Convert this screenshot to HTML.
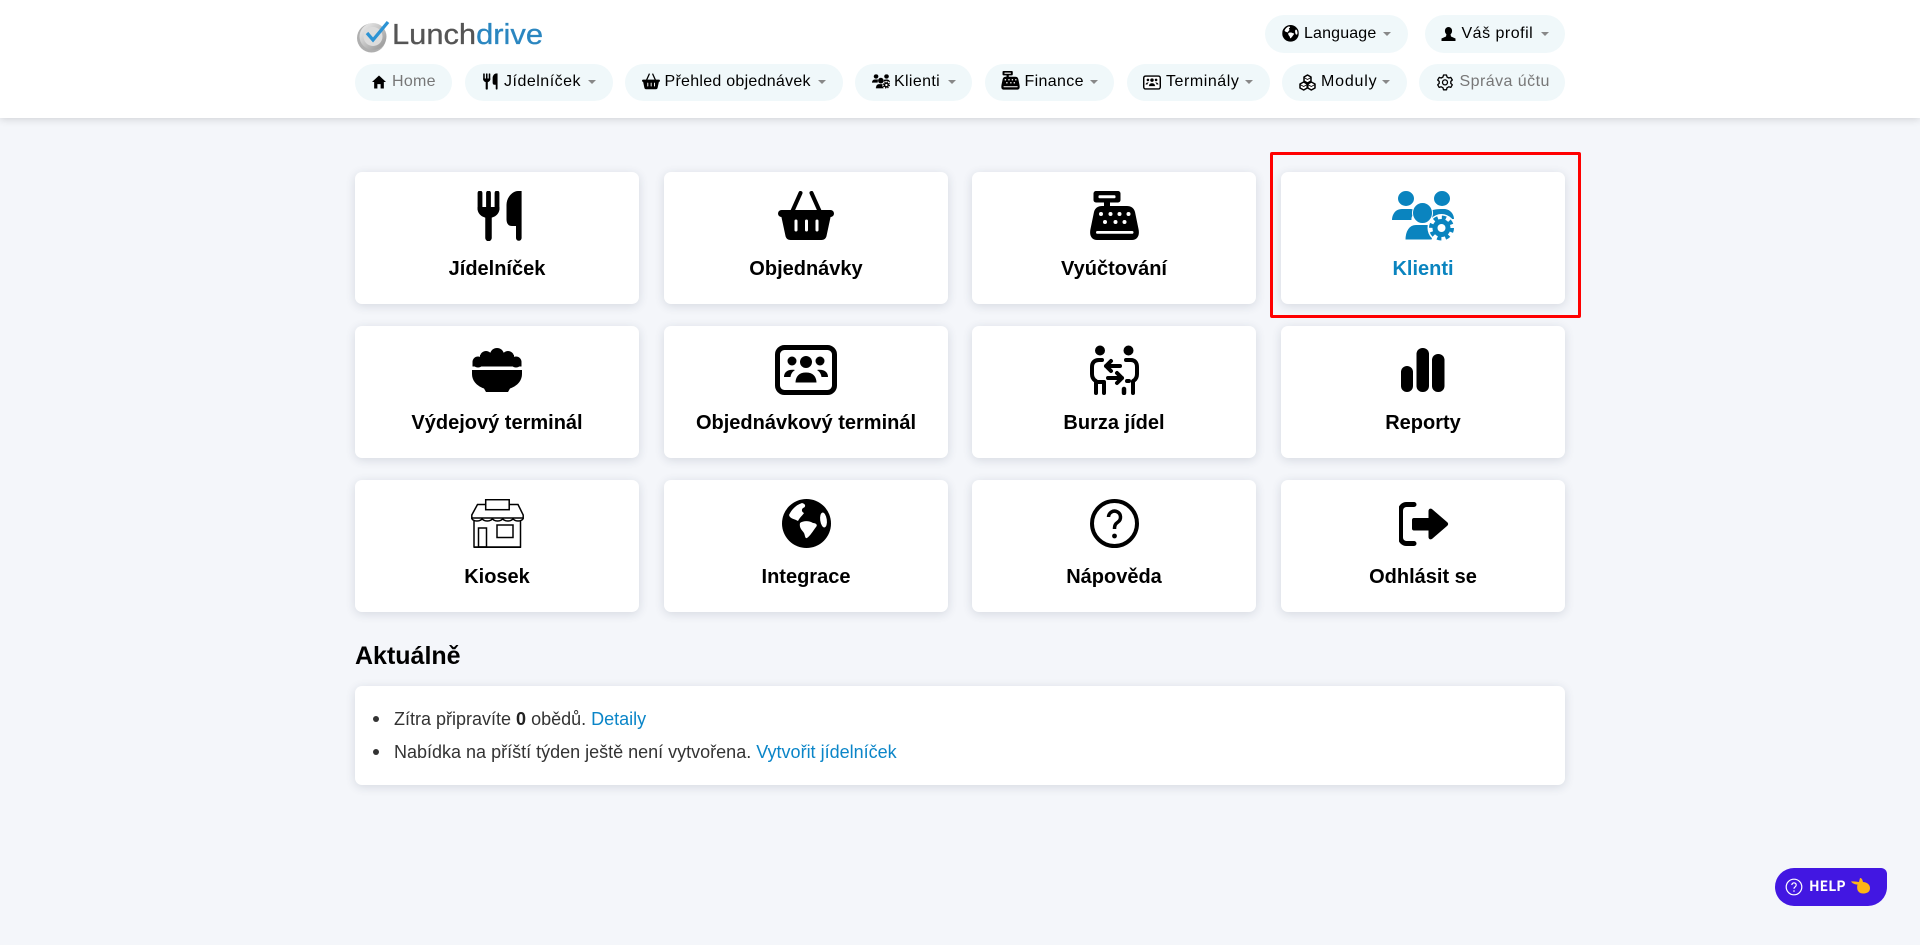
<!DOCTYPE html>
<html lang="cs"><head><meta charset="utf-8"><title>Lunchdrive</title>
<style>
html,body{margin:0;padding:0}
body{width:1920px;height:945px;overflow:hidden;background:#f4f6fa;position:relative;font-family:"Liberation Sans",sans-serif;color:#000}
.a,.p,.t,.c,.card,svg.i{position:absolute}
#hdr{position:absolute;left:0;top:0;width:1920px;height:118px;background:#fff;box-shadow:0 1px 8px rgba(0,0,0,.16)}
.p{background:#f0f8fa;border-radius:19px;height:37px}
.t{font-size:16px;line-height:37px;height:37px;white-space:nowrap}
.g{color:#777}
.c{width:0;height:0;border-left:4px solid transparent;border-right:4px solid transparent;border-top:4px solid #888}
.card{width:284px;height:132px;background:#fff;border-radius:7px;box-shadow:0 2px 10px rgba(30,40,70,.14)}
.card b{position:absolute;left:0;right:0;top:83px;height:28px;line-height:28px;text-align:center;font-size:20px}
.card svg{position:absolute;top:19px;left:50%;height:50px;overflow:visible}
a{color:#0a85c8;text-decoration:none}
</style></head><body>
<svg width="0" height="0" style="position:absolute"><defs>
<symbol id="fork" viewBox="0 0 52 50"><g stroke="#000" stroke-linecap="round" fill="none"><path d="M6 2V18M14.500 2V18M23 2V18" stroke-width="4.800"/><path d="M14.500 22V47" stroke-width="6.500"/></g><path d="M3.600 16H25.400V18C25.400 23 20.500 27 14.500 27S3.600 23 3.600 18Z"/><path d="M47.600 47a2.800 2.800 0 0 1-5.600 0V35h-4C34 35 32.500 32 32.500 28V14C32.500 6 39 0 44 0H47.600Z"/></symbol>
<symbol id="basket" viewBox="0 0 56 50"><path d="M14 21L22.500 2M42 21L33.500 2" stroke="#000" stroke-width="4" stroke-linecap="round"/><rect y="19" width="56" height="7" rx="3.500"/><path d="M3 24H53L48.500 45C48 47.500 46 49 43.500 49H12.500C10 49 8 47.500 7.500 45Z"/><path d="M18 30V39M28.500 30V39M39 30V39" stroke="#fff" stroke-width="3" stroke-linecap="round"/></symbol>
<symbol id="reg" viewBox="0 0 49 50"><rect x="3.500" width="27" height="11.500" rx="2.500"/><rect x="8.500" y="4.200" width="17" height="3" rx="1" fill="#fff"/><rect x="14" y="10" width="6" height="7"/><path d="M12 15H37C41 15 44 17 45 21L48.500 38C50 45 47 49 42 49H7C2 49-1 45 .5 38L4 21C5 17 8 15 12 15Z"/><g fill="#fff"><circle cx="11" cy="23" r="2"/><circle cx="20.500" cy="23" r="2"/><circle cx="29.500" cy="23" r="2"/><circle cx="38.500" cy="23" r="2"/><circle cx="15" cy="31" r="2"/><circle cx="25.500" cy="31" r="2"/><circle cx="34.500" cy="31" r="2"/><rect x="6" y="40" width="37.500" height="2.800" rx="1.400"/></g></symbol>
<symbol id="people" viewBox="0 0 62 50"><ellipse cx="14" cy="7.500" rx="8" ry="7.500"/><ellipse cx="50" cy="7.500" rx="8" ry="7.500"/><path d="M0 29C0 24 3 18 10 18H18C21 18 23 19 24 21C21 23 19 26 19.500 29Z"/><path d="M38 20C42 18 48 18 52 18C58 18 62 23 62 28H40C40 25 39 22 38 20Z"/><ellipse cx="30.500" cy="22" rx="10" ry="10.500" stroke="#fff" stroke-width="1"/><path d="M13 49C13 40 17 33.500 24 33.500H35C38 33.500 41 35 43 37L40 49Z" stroke="#fff" stroke-width="1"/><circle cx="49.500" cy="37" r="14" fill="#fff"/><circle cx="49.500" cy="37" r="9"/><circle cx="49.500" cy="37" r="10.500" fill="none" stroke="currentColor" stroke-width="4" stroke-dasharray="4.200 4.050"/><circle cx="49.500" cy="37" r="4" fill="#fff"/></symbol>
<symbol id="bowl" viewBox="0 0 50 50"><circle cx="25" cy="10" r="7"/><circle cx="14" cy="12" r="6"/><circle cx="36" cy="12" r="6"/><circle cx="6" cy="17" r="5.500"/><circle cx="44" cy="17" r="5.500"/><rect x="8" y="10" width="34" height="11"/><path d="M.5 17H49.500V21.500H.5Z"/><path d="M0 25H50V29C50 36 45 41 38 43.500L36 47H14L12 43.500C5 41 0 36 0 29Z"/></symbol>
<symbol id="screen" viewBox="0 0 62 50"><rect x="2.500" y="2.500" width="57" height="45" rx="7" fill="#fff" stroke="#000" stroke-width="5"/><circle cx="31" cy="17" r="6"/><circle cx="17" cy="16" r="4.500"/><circle cx="45" cy="16" r="4.500"/><path d="M9 32C9 27 13 24 20 25C17 27 16 29 15.500 32Z"/><path d="M53 32C53 27 49 24 42 25C45 27 46 29 46.500 32Z"/><path d="M20 38C20 31 24 27 31 27S42 31 42 38Z" stroke="#fff" stroke-width="1"/></symbol>
<symbol id="swap" viewBox="0 0 49 50"><circle cx="10" cy="5.500" r="5"/><circle cx="38.500" cy="5.500" r="5"/><g fill="none" stroke="#000" stroke-width="4" stroke-linecap="round" stroke-linejoin="round"><path d="M12 15H9C4 15 2 18 2 22V29C2 33 4 35 6 36V48M14 37H6M14 37V48"/><path d="M36 15H41C45 15 47 18 47 22V29C47 33 45 35 43 36V48M39 36H37"/><path d="M30 21H16M21 16L16 21L21 26"/><path d="M18 33H32M27 28L32 33L27 38"/><path d="M34 44V48" stroke-width="4.500"/></g></symbol>
<symbol id="bars" viewBox="0 0 44 50"><rect y="21" width="12" height="26" rx="6"/><rect x="15.500" y="3" width="12.500" height="44" rx="6"/><rect x="31" y="9" width="12.500" height="38" rx="6"/></symbol>
<symbol id="kiosk" viewBox="0 0 53 50"><g fill="none" stroke="#000" stroke-width="1.500"><rect x="14.700" y=".7" width="23.500" height="10" fill="#fff"/><path d="M14.700 5.500H6.500L.8 16V19H52.200V16L47 5.500H38.200"/><path d="M.8 19a5.100 3 0 0 0 10.300 0a5.100 3 0 0 0 10.300 0a5.100 3 0 0 0 10.300 0a5.100 3 0 0 0 10.300 0a5.100 3 0 0 0 10.200 0"/><path d="M3 22V48H49.500V22"/><rect x="7.500" y="29" width="8" height="19"/><rect x="26" y="26" width="16" height="12.500"/></g><path d="M3 47.500H50V49H3Z"/></symbol>
<symbol id="globe" viewBox="0 0 49 50"><circle cx="24.500" cy="24.500" r="24.500"/><g fill="#fff"><path d="M20 4C14 6 10 10 7 16C8 20 13 20 16 22C18 18 21 16 22 14C20 13 19 11 21 9C24 8 24 5 20 4Z"/><path d="M18 24C22 21 28 22 31 24C34 24 36 26 34 28C31 32 28 37 25 39C23 40 23 36 22 34C20 31 17 29 18 24Z"/><ellipse cx="41.500" cy="21" rx="3.300" ry="7.500" transform="rotate(-8 41.500 21)"/></g></symbol>
<symbol id="q" viewBox="0 0 49 50"><circle cx="24.500" cy="24.500" r="22.500" fill="#fff" stroke="#000" stroke-width="4"/><path d="M18.500 18a6 6 0 1 1 9.500 5c-2.500 1.800-3.500 3-3.500 7" fill="none" stroke="#000" stroke-width="3.500"/><circle cx="24.500" cy="37" r="2.400"/></symbol>
<symbol id="out" viewBox="0 0 50 50"><path d="M15 5.500H7.500a6 6 0 0 0-6 6V38.500a6 6 0 0 0 6 6H15" fill="none" stroke="#000" stroke-width="5" stroke-linecap="round"/><path d="M15 19H29.500V12C29.500 9.500 32 9 33.500 10.500L48 23C49.500 24.500 49.500 25.500 48 27L33.500 39.500C32 41 29.500 40.500 29.500 38V31.500H15C13.500 31.500 13 30.500 13 29.500V21C13 20 13.500 19 15 19Z"/></symbol>
<symbol id="home" viewBox="0 0 13 12"><path d="M6.500 0L13 6H11V12H8V8H5V12H2V6H0Z"/></symbol>
<symbol id="user" viewBox="0 0 14 14"><ellipse cx="7" cy="4" rx="3.600" ry="4"/><path d="M5 7L4.500 9.500L0 11.500V14H14V11.500L9.500 9.500L9 7Z"/></symbol>
<symbol id="gear" viewBox="0 0 16 17"><g fill="none" stroke="#000"><path stroke-width="1.300" stroke-linejoin="round" d="M6.500 1h3l.5 2 1.800 1 2-.6 1.500 2.600-1.500 1.400v2l1.500 1.400-1.500 2.600-2-.6-1.800 1-.5 2h-3l-.5-2-1.800-1-2 .6-1.500-2.600 1.500-1.400v-2l-1.500-1.400 1.500-2.600 2 .6 1.800-1z"/><circle cx="8" cy="8.400" r="2.500" stroke-width="1.300"/></g></symbol>
<symbol id="cubes" viewBox="0 0 17 17"><g fill="#fff" stroke="#000" stroke-width="1.500" stroke-linejoin="round"><path d="M8.500 1L12 3V7L8.500 9L5 7V3Z"/><path d="M4.700 8L8.200 10V14L4.700 16L1 14V10Z"/><path d="M12.300 8L16 10V14L12.300 16L8.800 14V10Z"/><path d="M5 3.500L8.500 5.500L12 3.500M1 10.500L4.700 12.500L8.200 10.500M8.800 10.500L12.300 12.500L16 10.500" stroke-width=".8"/></g></symbol>
</defs></svg>

<div id="hdr"></div>
<!-- logo -->
<svg class="a" style="left:355px;top:16px" width="192" height="40" viewBox="0 0 192 40">
<defs><linearGradient id="lg" x1="0" y1="0" x2="1" y2="1"><stop offset="0" stop-color="#f4f4f4"/><stop offset="1" stop-color="#8f8f8f"/></linearGradient></defs>
<circle cx="16.500" cy="22" r="14.500" fill="#8d8d8d" opacity=".7"/><circle cx="18" cy="20.500" r="13.500" fill="url(#lg)"/><circle cx="18" cy="20.500" r="9.500" fill="#dcdcdc"/>
<path d="M12 17L18 24L33 6" fill="none" stroke="#2c93d4" stroke-width="3.300"/>
<text x="37" y="28" font-family="Liberation Sans" font-size="29" textLength="151" lengthAdjust="spacingAndGlyphs" fill="#555" stroke="#555" stroke-width=".3">Lunch<tspan fill="#2a86c0" stroke="#2a86c0">drive</tspan></text></svg>

<!-- top pills -->
<div class="p" style="left:1265px;top:15px;width:143px;height:38px"></div>
<svg class="a" style="left:1282px;top:25px" width="17" height="17" viewBox="0 0 49 50"><use href="#globe"/></svg>
<div class="t" style="left:1304px;top:15px;letter-spacing:.15px">Language</div><div class="c" style="left:1383px;top:32px"></div>
<div class="p" style="left:1425px;top:15px;width:140px;height:38px"></div>
<svg class="a" style="left:1441px;top:27px" width="15" height="14"><use href="#user"/></svg>
<div class="t" style="left:1461.500px;top:15px;letter-spacing:.5px">Váš profil</div><div class="c" style="left:1541px;top:32px"></div>

<!-- nav -->
<div class="p" style="left:355px;top:64px;width:97px"></div>
<svg class="a" style="left:372px;top:75px" width="14" height="14" viewBox="0 0 13 12"><use href="#home"/></svg>
<div class="t g" style="left:392px;top:63px;letter-spacing:.3px">Home</div>

<div class="p" style="left:465px;top:64px;width:148px"></div>
<svg class="a" style="left:482px;top:73px" width="17" height="17" viewBox="0 0 52 50"><use href="#fork"/></svg>
<div class="t" style="left:504px;top:63px;letter-spacing:.5px">Jídelníček</div><div class="c" style="left:588px;top:80px"></div>

<div class="p" style="left:625px;top:64px;width:218px"></div>
<svg class="a" style="left:642px;top:73px" width="18" height="17" viewBox="0 0 56 50"><use href="#basket"/></svg>
<div class="t" style="left:664.500px;top:63px;letter-spacing:.27px">Přehled objednávek</div><div class="c" style="left:818px;top:80px"></div>

<div class="p" style="left:855px;top:64px;width:117px"></div>
<svg class="a" style="left:872px;top:74px;color:#000" width="18" height="15" viewBox="0 0 62 50"><use href="#people"/></svg>
<div class="t" style="left:894px;top:63px;letter-spacing:.35px">Klienti</div><div class="c" style="left:948px;top:80px"></div>

<div class="p" style="left:985px;top:64px;width:129px"></div>
<svg class="a" style="left:1001px;top:71px" width="19" height="19" viewBox="0 0 49 50"><use href="#reg"/></svg>
<div class="t" style="left:1024.500px;top:63px;letter-spacing:.35px">Finance</div><div class="c" style="left:1090px;top:80px"></div>

<div class="p" style="left:1127px;top:64px;width:143px"></div>
<svg class="a" style="left:1143px;top:74.500px" width="18" height="15" viewBox="0 0 62 50"><use href="#screen"/></svg>
<div class="t" style="left:1166px;top:63px;letter-spacing:.55px">Terminály</div><div class="c" style="left:1245px;top:80px"></div>

<div class="p" style="left:1282px;top:64px;width:125px"></div>
<svg class="a" style="left:1299px;top:74px" width="17" height="17"><use href="#cubes"/></svg>
<div class="t" style="left:1321px;top:63px;letter-spacing:.8px">Moduly</div><div class="c" style="left:1382px;top:80px"></div>

<div class="p" style="left:1419px;top:64px;width:146px"></div>
<svg class="a" style="left:1437px;top:74px" width="16" height="17"><use href="#gear"/></svg>
<div class="t g" style="left:1459.500px;top:63px;letter-spacing:.45px">Správa účtu</div>

<!-- cards -->
<div class="card" style="left:355px;top:172px"><svg style="width:52px;margin-left:-23px"><use href="#fork"/></svg><b>Jídelníček</b></div>
<div class="card" style="left:664px;top:172px"><svg style="width:56px;margin-left:-28px"><use href="#basket"/></svg><b>Objednávky</b></div>
<div class="card" style="left:972px;top:172px"><svg style="width:49px;margin-left:-24.500px"><use href="#reg"/></svg><b>Vyúčtování</b></div>
<div class="card" style="left:1281px;top:172px;color:#0a84bf"><svg style="width:62px;margin-left:-31px;fill:#0a84bf"><use href="#people"/></svg><b>Klienti</b></div>

<div class="card" style="left:355px;top:326px"><svg style="width:50px;margin-left:-25px"><use href="#bowl"/></svg><b>Výdejový terminál</b></div>
<div class="card" style="left:664px;top:326px"><svg style="width:62px;margin-left:-31px"><use href="#screen"/></svg><b>Objednávkový terminál</b></div>
<div class="card" style="left:972px;top:326px"><svg style="width:49px;margin-left:-24.500px"><use href="#swap"/></svg><b>Burza jídel</b></div>
<div class="card" style="left:1281px;top:326px"><svg style="width:44px;margin-left:-22px"><use href="#bars"/></svg><b>Reporty</b></div>

<div class="card" style="left:355px;top:480px"><svg style="width:53px;margin-left:-26.500px"><use href="#kiosk"/></svg><b>Kiosek</b></div>
<div class="card" style="left:664px;top:480px"><svg style="width:49px;margin-left:-24.500px"><use href="#globe"/></svg><b>Integrace</b></div>
<div class="card" style="left:972px;top:480px"><svg style="width:49px;margin-left:-24.500px"><use href="#q"/></svg><b>Nápověda</b></div>
<div class="card" style="left:1281px;top:480px"><svg style="width:50px;margin-left:-24px"><use href="#out"/></svg><b>Odhlásit se</b></div>

<!-- red box -->
<div class="a" style="left:1270px;top:152px;width:305px;height:160px;border:3px solid #f00;border-radius:2px"></div>

<!-- news -->
<div class="a" style="left:355px;top:640px;font-size:25px;font-weight:bold;line-height:32px">Aktuálně</div>
<div class="a" style="left:355px;top:686px;width:1210px;height:99px;background:#fff;border-radius:7px;box-shadow:0 2px 10px rgba(30,40,70,.14)"></div>
<div class="a" style="left:373px;top:716px;width:6px;height:6px;border-radius:50%;background:#333"></div>
<div class="a" style="left:373px;top:749px;width:6px;height:6px;border-radius:50%;background:#333"></div>
<div class="a" style="left:394px;top:703px;font-size:18px;line-height:33px;color:#333;white-space:nowrap">Zítra připravíte <b style="color:#222">0</b> obědů. <a href="#">Detaily</a></div>
<div class="a" style="left:394px;top:736px;font-size:18px;line-height:33px;color:#333;white-space:nowrap">Nabídka na příští týden ještě není vytvořena. <a href="#">Vytvořit jídelníček</a></div>

<!-- help -->
<div class="a" style="left:1775px;top:868px;width:112px;height:38px;background:#4217e2;border-radius:19px 6px 19px 19px"></div>
<svg class="a" style="left:1785px;top:878px" width="18" height="18" viewBox="0 0 18 18"><circle cx="9" cy="9" r="7.800" fill="none" stroke="#fff" stroke-width="1.200"/><path d="M6.800 7a2.200 2.200 0 1 1 3.500 1.800c-.9.600-1.300 1.100-1.300 2" fill="none" stroke="#fff" stroke-width="1.200"/><circle cx="9" cy="13" r=".8" fill="#fff"/></svg>
<div class="a" style="left:1809px;top:868px;font-family:'Noto Sans CJK JP','Liberation Sans',sans-serif;font-weight:700;font-size:14px;line-height:37px;color:#fff">HELP</div>
<svg class="a" style="left:1851px;top:878px" width="19" height="16" viewBox="0 0 19 16"><path fill="#fdb515" d="M0 3.500C3 3 6 3.800 8 4L9 0C11 0 11.500 2 12 4C15 4 19 6 19 10C19 14 16 15.500 12 15.500C9 15.500 7.500 14 6.500 12C6 10 6 8 6.500 6.500C4 6.500 1.500 5.500 0 3.500Z"/></svg>
</body></html>
